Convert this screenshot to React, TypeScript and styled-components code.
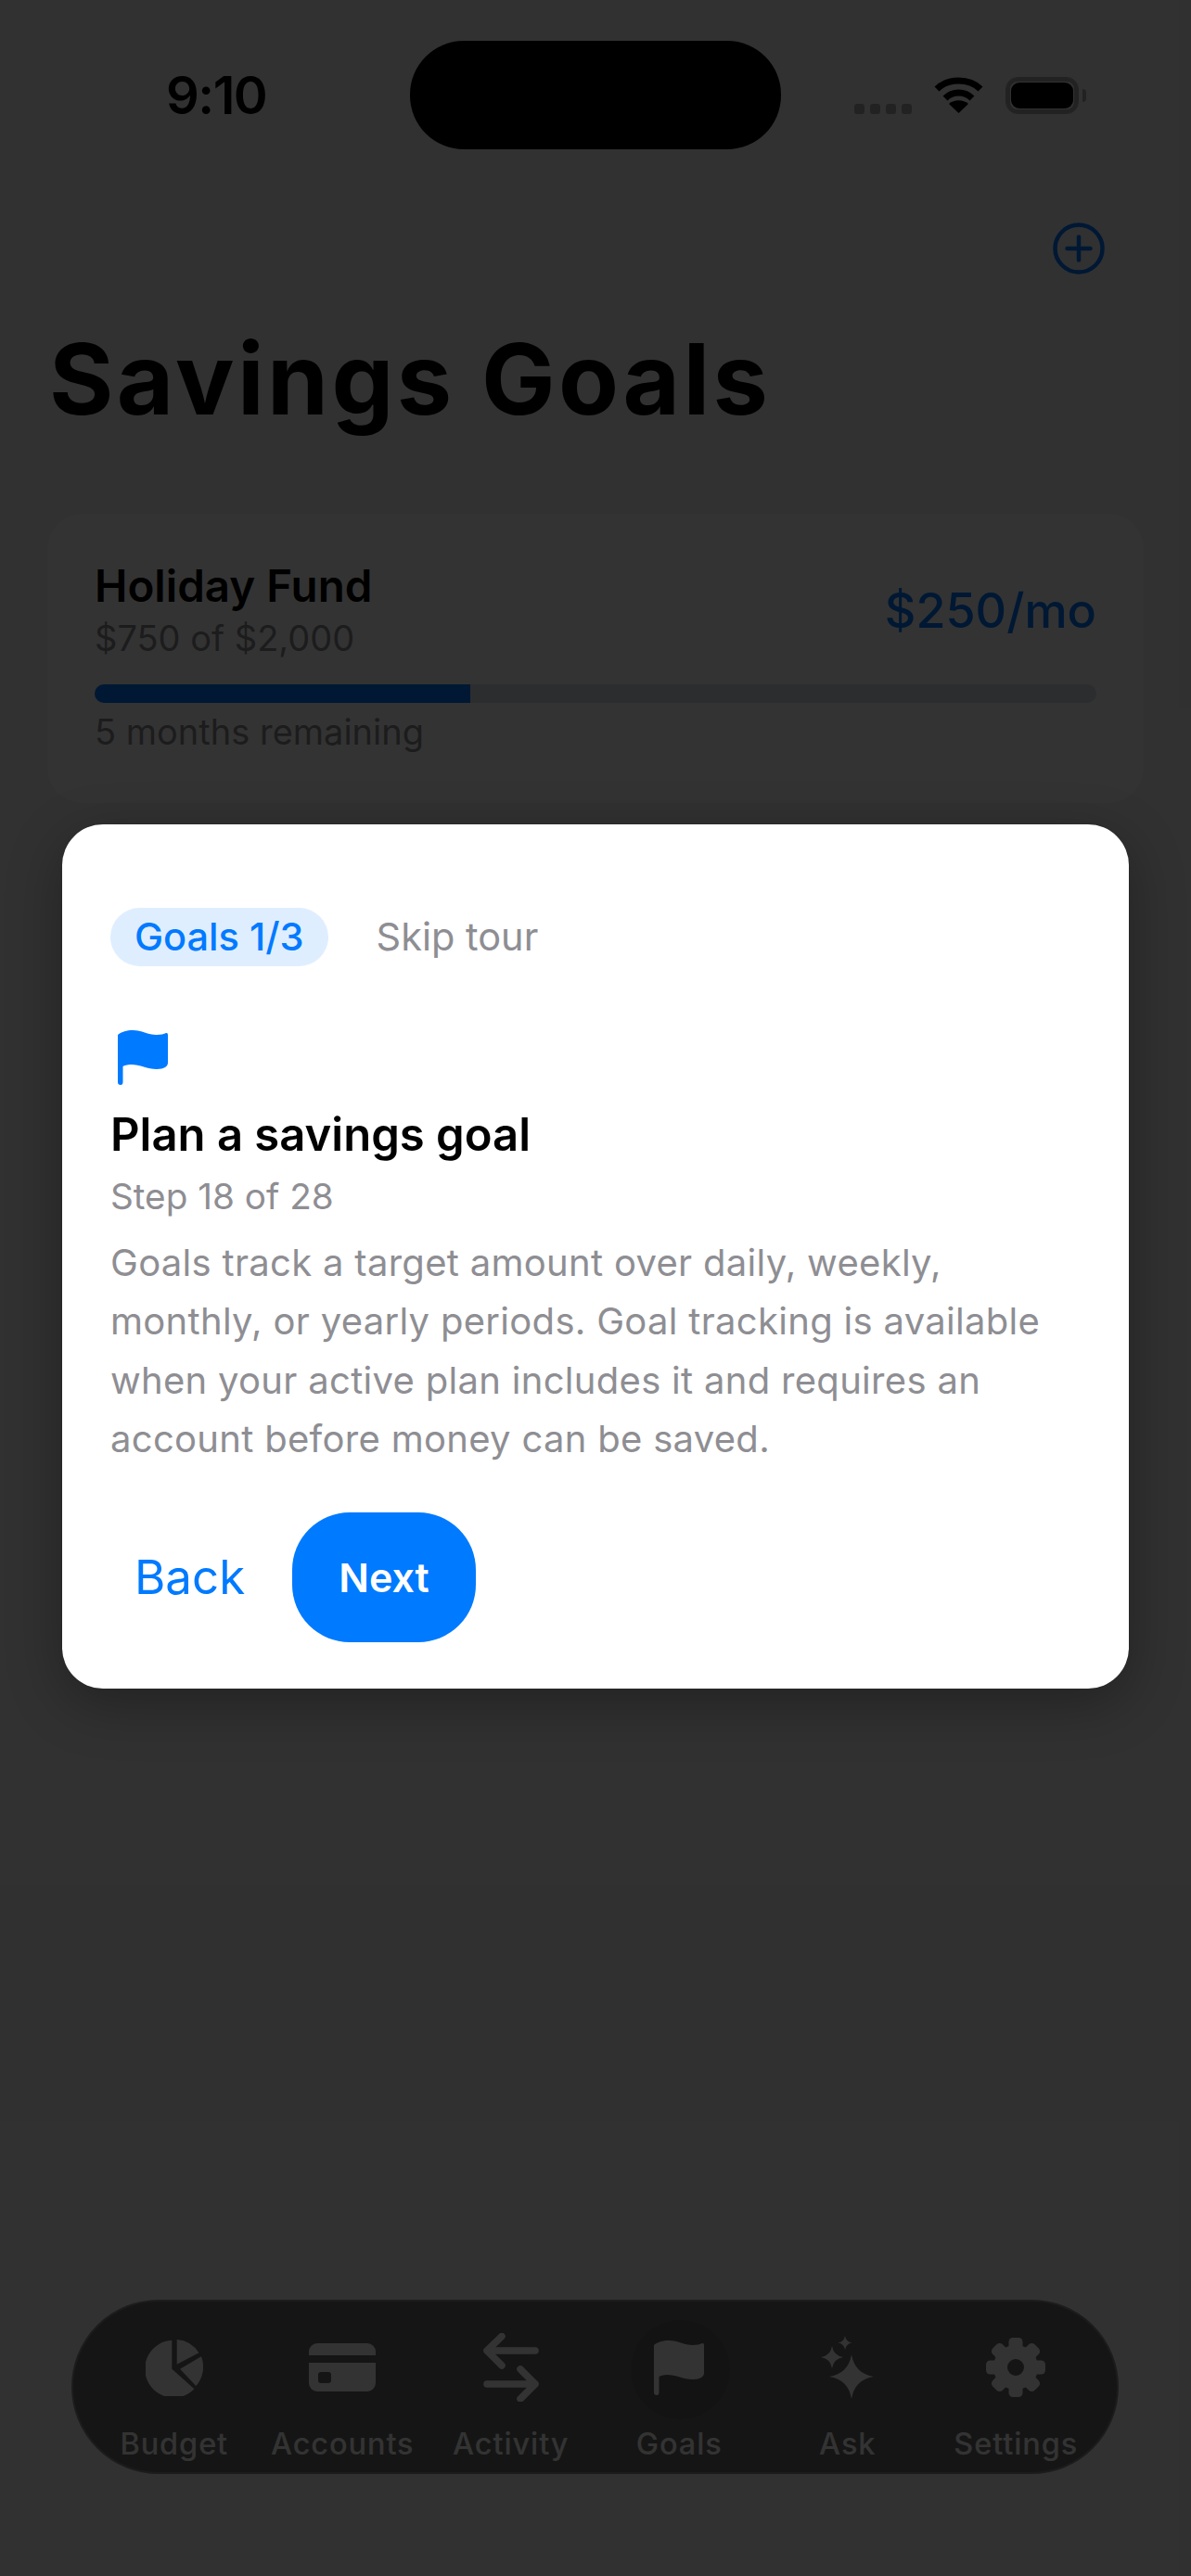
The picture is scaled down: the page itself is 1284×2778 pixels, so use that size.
import React from "react";
import styled, { createGlobalStyle } from "styled-components";

const Global = createGlobalStyle`
  html, body { margin: 0; padding: 0; background: #f2f2f7; }
  * { box-sizing: border-box; }
  body { font-family: "Inter", "Liberation Sans", sans-serif; }
`;

const Page = styled.div`
  position: relative;
  width: 1284px;
  height: 2778px;
  overflow: hidden;
  background: #f2f2f7;
  display: flex;
  flex-direction: column;
  color: #000;
`;

const StatusBar = styled.div`
  display: grid;
  grid-template-columns: 442px 400px 1fr;
  align-items: center;
  height: 117px;
  margin-top: 44px;
`;
const Time = styled.div`
  padding-left: 179px;
  font-size: 56px;
  line-height: 60px;
  font-weight: 600;
  letter-spacing: -1.5px;
`;
const Island = styled.div`
  height: 117px;
  border-radius: 58px;
  background: #000;
`;
const StatusIcons = styled.div`
  display: flex;
  align-items: flex-end;
  justify-content: flex-end;
  padding-right: 113px;
`;
const Signal = styled.div`
  display: flex;
  gap: 6px;
  margin-right: 24px;
`;
const SignalDot = styled.span`
  width: 11px;
  height: 11px;
  border-radius: 3px;
  background: #aaa;
`;
const Battery = styled.div`
  display: flex;
  align-items: center;
  margin-left: 24px;
`;
const BatteryBody = styled.div`
  width: 79px;
  height: 40px;
  padding: 5px;
  border-radius: 13px;
  border: 1px solid #aaa;
  box-shadow: inset 0 0 0 4px #aaa;
`;
const BatteryFill = styled.div`
  width: 100%;
  height: 100%;
  border-radius: 9px;
  background: #000;
`;
const BatteryCap = styled.div`
  width: 4px;
  height: 14px;
  margin-left: 4px;
  border-radius: 0 4px 4px 0;
  background: #aaa;
`;

const NavRow = styled.div`
  display: flex;
  justify-content: flex-end;
  padding-right: 93px;
  margin-top: 79px;
  color: #007aff;
`;
const Title = styled.h1`
  margin: 53px 0 0 53px;
  font-size: 106px;
  line-height: 120px;
  font-weight: 700;
  letter-spacing: 3.4px;
`;

const GoalCard = styled.section`
  margin: 85px 51px 0;
  height: 312px;
  padding: 50px 51px 0;
  background: #fff;
  border-radius: 38px;
`;
const GoalTop = styled.div`
  display: flex;
  justify-content: space-between;
  align-items: center;
`;
const GoalName = styled.div`
  font-size: 47.5px;
  line-height: 56px;
  font-weight: 600;
`;
const GoalSub = styled.div`
  font-size: 38px;
  line-height: 50px;
  margin-top: ${(p: { $gap?: number }) => p.$gap ?? 0}px;
  color: #8e8e93;
`;
const GoalRate = styled.div`
  font-size: 52px;
  line-height: 64px;
  font-weight: 500;
  color: #007aff;
`;
const Track = styled.div`
  height: 20px;
  margin-top: 25px;
  border-radius: 10px;
  background: #d5dee8;
  overflow: hidden;
`;
const Fill = styled.div`
  height: 100%;
  background: #007aff;
`;

const TabBar = styled.nav`
  position: absolute;
  z-index: 0;
  left: 77px;
  top: 2480px;
  width: 1129px;
  height: 188px;
  padding: 0 18px;
  display: grid;
  grid-template-columns: repeat(6, 1fr);
  border-radius: 94px;
  background: #696969;
  border: 2px solid #8a8a8a;
`;
const Tab = styled.div`
  position: relative;
  display: flex;
  flex-direction: column;
  align-items: center;
  color: #fff;
`;
const TabIcon = styled.div`
  height: 142px;
  display: flex;
  align-items: center;
  justify-content: center;
  z-index: 1;
`;
const TabHalo = styled.div`
  position: absolute;
  top: 20px;
  left: 38px;
  width: 107px;
  height: 107px;
  border-radius: 50%;
  background: #626262;
`;
const TabLabel = styled.div`
  margin-top: -8px;
  font-size: 32.5px;
  line-height: 40px;
  font-weight: 500;
  letter-spacing: 0.9px;
  z-index: 1;
  white-space: nowrap;
`;

const Scrim = styled.div`
  position: absolute;
  z-index: 1;
  inset: 0;
  background: rgba(0, 0, 0, 0.8);
`;
const Dialog = styled.div`
  position: absolute;
  z-index: 2;
  left: 67px;
  top: 889px;
  width: 1150px;
  height: 932px;
  padding: 90px 52px 0;
  background: #fff;
  border-radius: 44px;
  box-shadow: 0 16px 60px rgba(0, 0, 0, 0.3);
`;
const DialogTop = styled.div`
  display: flex;
  align-items: center;
  gap: 52px;
`;
const Pill = styled.div`
  height: 63px;
  padding: 0 26px 2px;
  display: flex;
  align-items: center;
  border-radius: 32px;
  background: #dfeeff;
  color: #007aff;
  font-size: 41.5px;
  font-weight: 500;
`;
const Skip = styled.div`
  margin-top: -2px;
  font-size: 41.5px;
  color: #8e8e93;
`;
const DialogFlag = styled.div`
  margin: 69px 0 0 8px;
  height: 59px;
  color: #007aff;
`;
const DialogTitle = styled.h2`
  margin: 22px 0 0;
  font-size: 49px;
  line-height: 64px;
  font-weight: 600;
`;
const Step = styled.div`
  margin-top: 10px;
  font-size: 38.700px;
  line-height: 48px;
  color: #8e8e93;
`;
const Body = styled.p`
  margin: 15.5px 0 0;
  font-size: 40px;
  line-height: 63.6px;
  color: #8e8e93;
  letter-spacing: 0.3px;
`;
const Actions = styled.div`
  display: flex;
  align-items: center;
  margin-top: 47px;
`;
const BackButton = styled.div`
  width: 196px;
  padding-left: 26px;
  font-size: 51px;
  color: #007aff;
`;
const NextButton = styled.div`
  width: 198px;
  height: 140px;
  display: flex;
  align-items: center;
  justify-content: center;
  border-radius: 62px;
  background: #007aff;
  color: #fff;
  font-size: 43px;
  font-weight: 600;
`;

const FlagIcon = () => (
  <svg width="54" height="59" viewBox="0 0 54 59" fill="currentColor">
    <path d="M0 5C4 1.500 10 0 16 0C26 0 32 5 42 5C46 5 50 4 52 3Q54 2.500 54 5V35C54 39 50 42 42 42C32 42 24 37 14 37C10 37 7 38 5.500 39V56Q5.500 59 3 59Q0 59 0 56Z" />
  </svg>
);
const PieIcon = () => (
  <svg width="62" height="61" viewBox="0 0 62 61" fill="currentColor">
    <path d="M28.300 .7V31.700L52.400 53.300A31 31 0 1 1 28.300 .7Z" />
    <path d="M33.700 0V26.700L57.400 14.300A31 31 0 0 0 33.700 0Z" />
    <path d="M37.100 31.700L60 18.300A31 31 0 0 1 54.300 50Z" />
  </svg>
);
const CardIcon = () => (
  <svg width="72" height="52" viewBox="0 0 72 52" fill="currentColor">
    <path d="M9 0H63A9 9 0 0 1 72 9V13H0V9A9 9 0 0 1 9 0Z" />
    <path fillRule="evenodd" d="M0 21H72V43A9 9 0 0 1 63 52H9A9 9 0 0 1 0 43ZM13 31A3 3 0 0 0 10 34V40A3 3 0 0 0 13 43H21A3 3 0 0 0 24 40V34A3 3 0 0 0 21 31Z" />
  </svg>
);
const SwapIcon = () => (
  <svg width="60" height="74" viewBox="0 0 60 74" fill="none" stroke="currentColor" strokeWidth="7.500" strokeLinecap="round" strokeLinejoin="round">
    <path d="M56 19H4M20 3.500L4 19L20 35" />
    <path d="M4 55H56M40 39L56 55L40 71" />
  </svg>
);
const star = (cx: number, cy: number, r: number) => {
  const k = r * 0.14;
  return `M${cx} ${cy - r}Q${cx + k} ${cy - k} ${cx + r} ${cy}Q${cx + k} ${cy + k} ${cx} ${cy + r}Q${cx - k} ${cy + k} ${cx - r} ${cy}Q${cx - k} ${cy - k} ${cx} ${cy - r}Z`;
};
const SparkleIcon = () => (
  <svg width="58" height="68" viewBox="0 0 58 68" fill="currentColor">
    <path d={star(33, 44, 24)} />
    <path d={star(12, 23, 12)} />
    <path d={star(26, 7.500, 7.500)} />
  </svg>
);
const GearIcon = () => (
  <svg width="64" height="64" viewBox="-32 -32 64 64" fill="currentColor">
    <circle r="16.500" fill="none" stroke="currentColor" strokeWidth="15" />
    {[0, 45, 90, 135, 180, 225, 270, 315].map((a) => (
      <rect key={a} x="-7.500" y="-32" width="15" height="14" rx="4.500" transform={`rotate(${a})`} />
    ))}
  </svg>
);

const tabs = [
  { label: "Budget", icon: <PieIcon /> },
  { label: "Accounts", icon: <CardIcon /> },
  { label: "Activity", icon: <SwapIcon /> },
  { label: "Goals", icon: <FlagIcon />, active: true },
  { label: "Ask", icon: <SparkleIcon /> },
  { label: "Settings", icon: <GearIcon /> },
];

export default function App() {
  return (
    <Page>
      <Global />
      <StatusBar>
        <Time>9:10</Time>
        <Island />
        <StatusIcons>
          <Signal>
            <SignalDot />
            <SignalDot />
            <SignalDot />
            <SignalDot />
          </Signal>
          <svg width="53" height="40" viewBox="0 0 53 40" fill="none" stroke="#000" strokeWidth="7">
            <path d="M3 13C15 1 38 1 50 13" />
            <path d="M12 23C20 15 33 15 41 23" />
            <path d="M26.500 39L16 29C22 24 31 24 37 29Z" fill="#000" stroke="none" />
          </svg>
          <Battery>
            <BatteryBody>
              <BatteryFill />
            </BatteryBody>
            <BatteryCap />
          </Battery>
        </StatusIcons>
      </StatusBar>
      <NavRow>
        <svg width="56" height="56" viewBox="0 0 56 56" fill="none" stroke="currentColor" strokeWidth="4.500" strokeLinecap="round">
          <circle cx="28" cy="28" r="25.500" />
          <path d="M15.500 28H40.500M28 15.500V40.500" />
        </svg>
      </NavRow>
      <Title>Savings Goals</Title>
      <GoalCard>
        <GoalTop>
          <div>
            <GoalName>Holiday Fund</GoalName>
            <GoalSub $gap={3}>$750 of $2,000</GoalSub>
          </div>
          <GoalRate>$250/mo</GoalRate>
        </GoalTop>
        <Track>
          <Fill style={{ width: `${(750 / 2000) * 100}%` }} />
        </Track>
        <GoalSub $gap={6}>5 months remaining</GoalSub>
      </GoalCard>
      <TabBar>
        {tabs.map((t) => (
          <Tab key={t.label}>
            {t.active && <TabHalo />}
            <TabIcon>{t.icon}</TabIcon>
            <TabLabel>{t.label}</TabLabel>
          </Tab>
        ))}
      </TabBar>
      <Scrim />
      <Dialog>
        <DialogTop>
          <Pill>Goals 1/3</Pill>
          <Skip>Skip tour</Skip>
        </DialogTop>
        <DialogFlag>
          <FlagIcon />
        </DialogFlag>
        <DialogTitle>Plan a savings goal</DialogTitle>
        <Step>Step 18 of 28</Step>
        <Body>
          Goals track a target amount over daily, weekly,
          <br />
          monthly, or yearly periods. Goal tracking is available
          <br />
          when your active plan includes it and requires an
          <br />
          account before money can be saved.
        </Body>
        <Actions>
          <BackButton>Back</BackButton>
          <NextButton>Next</NextButton>
        </Actions>
      </Dialog>
    </Page>
  );
}
